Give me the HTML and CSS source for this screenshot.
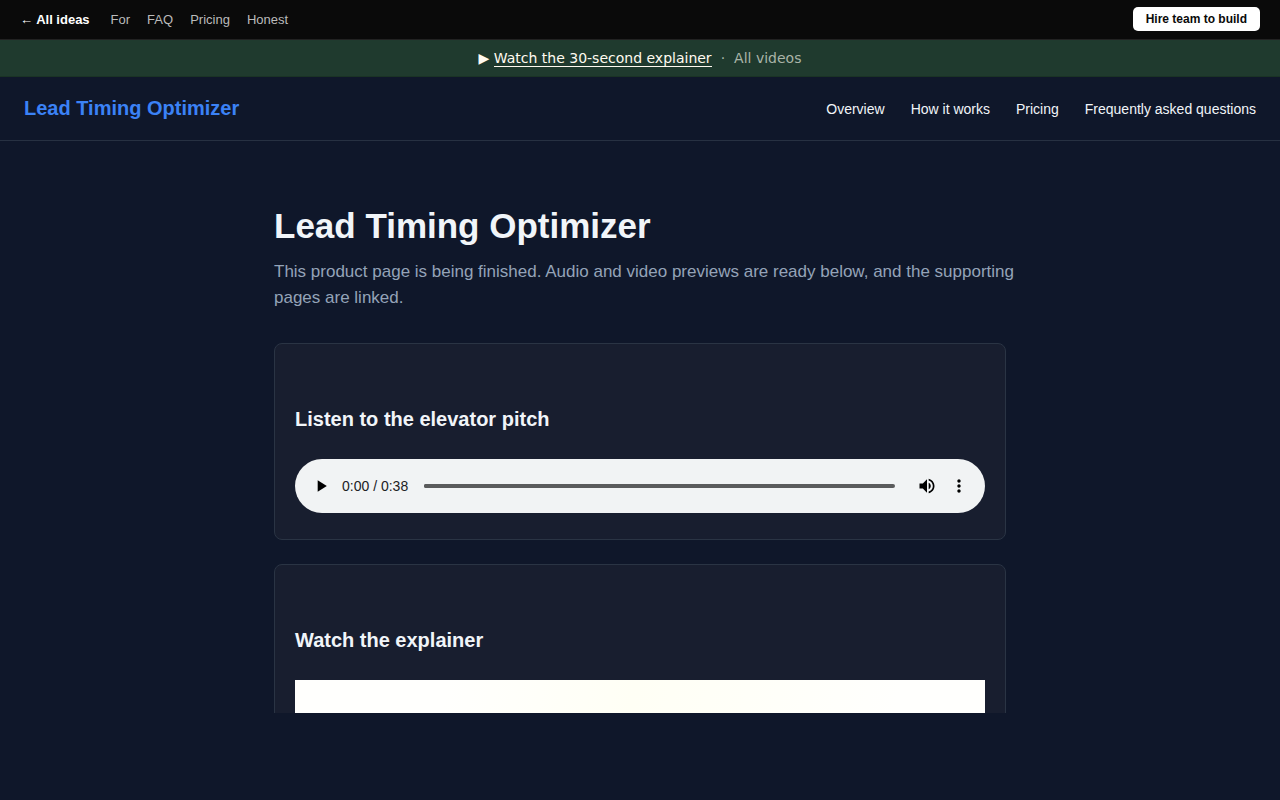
FILE: index.html
```html
<!DOCTYPE html>
<html lang="en">
<head>
  <meta charset="UTF-8">
  <meta name="viewport" content="width=device-width, initial-scale=1.0">
  <title>Lead Timing Optimizer</title>
  <link rel="stylesheet" href="styles.css">
</head>
<body>
  <nav class="topbar" aria-label="Ideas">
    <a class="back" href="#">← All ideas</a>
    <a href="#">For</a>
    <a href="#">FAQ</a>
    <a href="#">Pricing</a>
    <a href="#">Honest</a>
    <a class="hire" href="#">Hire team to build</a>
  </nav>

  <div class="video-strip">
    <span>▶ <a class="watch" href="#explainer">Watch the 30-second explainer</a></span>
    <span class="dot">·</span>
    <a class="all" href="#">All videos</a>
  </div>

  <header class="site-header">
    <a class="brand" href="#">Lead Timing Optimizer</a>
    <nav class="site-nav" aria-label="Main">
      <a href="#">Overview</a>
      <a href="#">How it works</a>
      <a href="#">Pricing</a>
      <a href="#">Frequently asked questions</a>
    </nav>
  </header>

  <main>
    <div class="container">
      <h1>Lead Timing Optimizer</h1>
      <p class="lede">This product page is being finished. Audio and video previews are ready below, and the supporting pages are linked.</p>

      <section class="card">
        <h2>Listen to the elevator pitch</h2>
        <div class="player">
          <button type="button" class="icon-btn" aria-label="Play">
            <svg width="20" height="20" viewBox="0 0 24 24"><path d="M8 5v14l11-7z"/></svg>
          </button>
          <span class="time">0:00 / 0:38</span>
          <input class="seek" type="range" min="0" max="38" value="0" aria-label="Seek">
          <button type="button" class="icon-btn" aria-label="Mute">
            <svg width="20" height="20" viewBox="0 0 24 24"><path d="M3 9v6h4l5 5V4L7 9H3zm13.500 3c0-1.770-1.020-3.290-2.500-4.030v8.050c1.480-.73 2.500-2.250 2.500-4.020zM14 3.230v2.060c2.890.86 5 3.540 5 6.710s-2.110 5.850-5 6.710v2.060c4.010-.91 7-4.490 7-8.770s-2.990-7.860-7-8.770z"/></svg>
          </button>
          <button type="button" class="icon-btn" aria-label="More options">
            <svg width="20" height="20" viewBox="0 0 24 24"><path d="M12 8c1.100 0 2-.9 2-2s-.9-2-2-2-2 .9-2 2 .9 2 2 2zm0 2c-1.100 0-2 .9-2 2s.9 2 2 2 2-.9 2-2-.9-2-2-2zm0 6c-1.100 0-2 .9-2 2s.9 2 2 2 2-.9 2-2-.9-2-2-2z"/></svg>
          </button>
        </div>
      </section>

      <section class="card" id="explainer">
        <h2>Watch the explainer</h2>
        <div class="video"></div>
      </section>
    </div>
  </main>
</body>
</html>
```

FILE: styles.css
```css
* {
  box-sizing: border-box;
}

body {
  display: flex;
  flex-direction: column;
  height: 100vh;
  margin: 0;
  padding-bottom: 87px;
  font-family: "Liberation Sans", Arial, sans-serif;
  background: #0f172a;
  color: #f1f5f9;
}

a {
  color: inherit;
  text-decoration: none;
}

/* Top bar */
.topbar {
  display: flex;
  flex-shrink: 0;
  align-items: center;
  gap: 17px;
  height: 40px;
  padding: 0 20px 1px;
  background: #0a0a0a;
  border-bottom: 1px solid #222;
  color: #bbb;
  font-size: 13px;
}

.topbar .back {
  margin-right: 4px;
  color: #fff;
  font-weight: bold;
}

.topbar .hire {
  margin-left: auto;
  padding: 5px 13px;
  border-radius: 5px;
  background: #fff;
  color: #0a0a0a;
  font-size: 12px;
  font-weight: bold;
  line-height: 14px;
}

/* Explainer strip */
.video-strip {
  display: flex;
  flex-shrink: 0;
  align-items: center;
  justify-content: center;
  gap: 9px;
  height: 37px;
  background: #1f3a2e;
  border-bottom: 1px solid #1a3325;
  color: #fffaf0;
  font-family: "DejaVu Sans", sans-serif;
  font-size: 14px;
}

.video-strip .watch {
  border-bottom: 1px solid #fffaf0;
}

.video-strip .dot,
.video-strip .all {
  color: #a9b4a8;
}

/* Site header */
.site-header {
  display: flex;
  flex-shrink: 0;
  align-items: center;
  justify-content: space-between;
  height: 64px;
  padding: 0 24px;
  border-bottom: 1px solid #273142;
}

.brand {
  color: #3b82f6;
  font-size: 20px;
  font-weight: bold;
}

.site-nav {
  display: flex;
  gap: 26px;
  font-size: 14px;
}

/* Content */
main {
  flex: 1;
  min-height: 0;
  overflow: hidden;
}

.container {
  max-width: 780px;
  margin: 0 auto;
  padding: 64px 24px;
}

h1 {
  margin: 0 0 12px;
  font-size: 35px;
  line-height: 42px;
}

.lede {
  margin: 0 -12px 32px 0;
  color: #94a3b8;
  font-size: 17px;
  line-height: 26px;
}

.card {
  margin-bottom: 24px;
  padding: 20px;
  background: #181e2f;
  border: 1px solid #2a3444;
  border-radius: 8px;
}

h2 {
  margin: 40px 0 24px;
  font-size: 20px;
  line-height: 31px;
}

/* Audio player */
.player {
  display: flex;
  align-items: center;
  height: 54px;
  margin-bottom: 6px;
  padding: 0 10px;
  border-radius: 27px;
  background: #f1f3f4;
  color: #202124;
  font-size: 14px;
}

.icon-btn {
  display: flex;
  align-items: center;
  justify-content: center;
  width: 32px;
  height: 32px;
  padding: 0;
  border: none;
  background: none;
  cursor: pointer;
}

.time {
  margin: 0 16px 0 5px;
}

.seek {
  flex: 1;
  min-width: 0;
  height: 4px;
  margin: 0 16px 0 0;
  appearance: none;
  border-radius: 2px;
  background: #5a5b5c;
}

.seek::-webkit-slider-thumb {
  appearance: none;
  width: 4px;
  height: 4px;
  border-radius: 2px;
  background: #5a5b5c;
}

.video {
  aspect-ratio: 16 / 9;
  background: linear-gradient(100deg, #fffffd 20%, #fffff5 45%, #fffff8 60%, #fffffd 80%);
}

@media (max-width: 768px) {
  .site-header {
    height: auto;
    flex-direction: column;
    gap: 12px;
    padding: 16px 24px;
  }

  .site-nav {
    flex-wrap: wrap;
  }

  .lede {
    margin-right: 0;
  }
}
```
